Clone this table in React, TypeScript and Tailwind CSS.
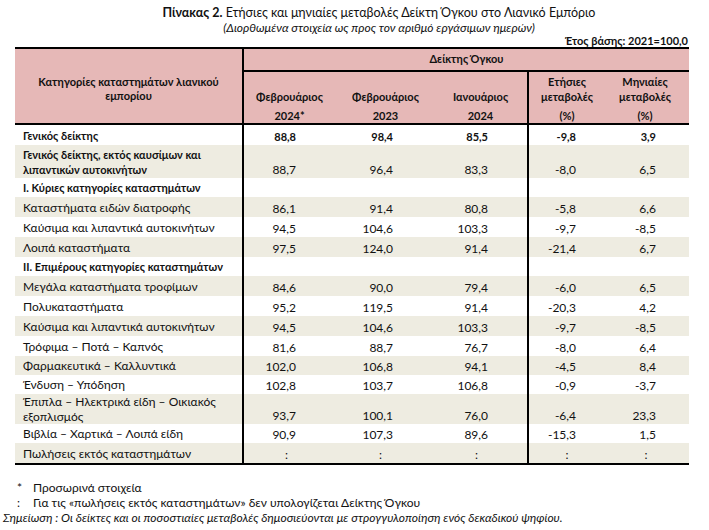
import React from "react";

type Row = {
  label: string[];
  bold?: boolean;
  boldValues?: boolean;
  h: string;
  v?: string[];
  colon?: boolean;
};

const rows: Row[] = [
  { label: ["Γενικός δείκτης"], bold: true, boldValues: true, h: "h-[20px]", v: ["88,8", "98,4", "85,5", "-9,8", "3,9"] },
  { label: ["Γενικός δείκτης, εκτός καυσίμων και", "λιπαντικών αυτοκινήτων"], bold: true, h: "h-[33px]", v: ["88,7", "96,4", "83,3", "-8,0", "6,5"] },
  { label: ["I. Κύριες κατηγορίες καταστημάτων"], bold: true, h: "h-[19px]" },
  { label: ["Καταστήματα ειδών διατροφής"], h: "h-[20px]", v: ["86,1", "91,4", "80,8", "-5,8", "6,6"] },
  { label: ["Καύσιμα και λιπαντικά αυτοκινήτων"], h: "h-[20px]", v: ["94,5", "104,6", "103,3", "-9,7", "-8,5"] },
  { label: ["Λοιπά καταστήματα"], h: "h-[20px]", v: ["97,5", "124,0", "91,4", "-21,4", "6,7"] },
  { label: ["II. Επιμέρους κατηγορίες καταστημάτων"], bold: true, h: "h-[19px]" },
  { label: ["Μεγάλα καταστήματα τροφίμων"], h: "h-[20px]", v: ["84,6", "90,0", "79,4", "-6,0", "6,5"] },
  { label: ["Πολυκαταστήματα"], h: "h-[20px]", v: ["95,2", "119,5", "91,4", "-20,3", "4,2"] },
  { label: ["Καύσιμα και λιπαντικά αυτοκινήτων"], h: "h-[20px]", v: ["94,5", "104,6", "103,3", "-9,7", "-8,5"] },
  { label: ["Τρόφιμα – Ποτά – Καπνός"], h: "h-[20px]", v: ["81,6", "88,7", "76,7", "-8,0", "6,4"] },
  { label: ["Φαρμακευτικά – Καλλυντικά"], h: "h-[19px]", v: ["102,0", "106,8", "94,1", "-4,5", "8,4"] },
  { label: ["Ένδυση – Υπόδηση"], h: "h-[19px]", v: ["102,8", "103,7", "106,8", "-0,9", "-3,7"] },
  { label: ["Έπιπλα – Ηλεκτρικά είδη – Οικιακός", "εξοπλισμός"], h: "h-[30px]", v: ["93,7", "100,1", "76,0", "-6,4", "23,3"] },
  { label: ["Βιβλία – Χαρτικά – Λοιπά είδη"], h: "h-[19px]", v: ["90,9", "107,3", "89,6", "-15,3", "1,5"] },
  { label: ["Πωλήσεις εκτός καταστημάτων"], h: "h-[20px]", v: [":", ":", ":", ":", ":"], colon: true },
];

const colCls = [
  "w-[91px] pr-[39px]",
  "w-[101px] pr-[43px]",
  "w-[93px] pr-[39px] border-r-2 border-black",
  "w-[76px] pr-[29px]",
  "w-[84px] pr-[33px]",
];
const colonCls = [
  "w-[91px] pr-[6px]",
  "w-[101px] pr-[10px]",
  "w-[93px] pr-[10px] border-r-2 border-black",
  "w-[76px]",
  "w-[84px] pr-[2px]",
];

function HeaderCol({ className, top, bottom }: { className: string; top: string[]; bottom: string }) {
  return (
    <div className={"flex flex-col " + className}>
      <div className="h-[32px] flex flex-col justify-end items-center leading-[15px]">
        {top.map((t) => (
          <span key={t}>{t}</span>
        ))}
      </div>
      <div className="h-[19px] flex items-end justify-center leading-[14px]">{bottom}</div>
    </div>
  );
}

export default function App() {
  return (
    <div
      className="w-[709px] h-[530px] bg-white text-[#111] relative overflow-hidden"
      style={{ fontFamily: "Lato, 'Noto Sans', sans-serif" }}
    >
      <div className="pl-[49px] pt-[5px] text-center">
        <p className="text-[12.5px] leading-[16px]">
          <span className="font-bold">Πίνακας 2.</span> Ετήσιες και μηνιαίες μεταβολές Δείκτη Όγκου στο Λιανικό Εμπόριο
        </p>
        <p className="text-[12px] leading-[14px] italic">(Διορθωμένα στοιχεία ως προς τον αριθμό εργάσιμων ημερών)</p>
      </div>
      <p className="text-right pr-[21px] font-bold text-[11px] leading-[12px]">Έτος βάσης: 2021=100,0</p>

      <div className="ml-[15px] w-[674px] border-t-2 border-b-2 border-black text-[12px]">
        {/* header */}
        <div className="flex h-[76px] bg-[#e6b8b7] border-b-2 border-black font-bold text-[11px]">
          <div className="w-[229px] border-r-2 border-black flex items-center justify-center text-center leading-[14px] pt-[5px]">
            <div>
              Κατηγορίες καταστημάτων λιανικού
              <br />
              εμπορίου
            </div>
          </div>
          <div className="flex-1 flex flex-col">
            <div className="h-[23px] border-b-2 border-black flex items-center justify-center">Δείκτης Όγκου</div>
            <div className="flex-1 flex">
              <HeaderCol className="w-[91px]" top={["Φεβρουάριος"]} bottom="2024*" />
              <HeaderCol className="w-[101px]" top={["Φεβρουάριος"]} bottom="2023" />
              <HeaderCol className="w-[93px] border-r-2 border-black pr-[2px]" top={["Ιανουάριος"]} bottom="2024" />
              <HeaderCol className="w-[76px]" top={["Ετήσιες", "μεταβολές"]} bottom="(%)" />
              <HeaderCol className="w-[84px] pr-[4px]" top={["Μηνιαίες", "μεταβολές"]} bottom="(%)" />
            </div>
          </div>
        </div>

        {/* body */}
        {rows.map((r, i) => (
          <div key={i} className={"flex " + r.h + (i % 2 === 1 ? " bg-[#eeece1]" : "")}>
            <div
              className={
                "w-[229px] border-r-2 border-black pl-[8px] flex flex-col justify-center leading-[15px]" +
                (r.bold ? " font-bold text-[11px]" : "")
              }
            >
              {r.label.map((l) => (
                <span key={l}>{l}</span>
              ))}
            </div>
            {(r.v ?? ["", "", "", "", ""]).map((val, j) => (
              <div
                key={j}
                className={
                  "flex items-end leading-[14px] pb-[1px] " +
                  (r.colon ? "justify-center " + colonCls[j] : "justify-end " + colCls[j]) +
                  (r.boldValues ? " font-bold text-[11px]" : "")
                }
              >
                {val}
              </div>
            ))}
          </div>
        ))}
      </div>

      <div className="mt-[15px] text-[12px] leading-[15px]">
        <div className="flex pl-[17px]">
          <span className="w-[16px]">*</span>
          <span>Προσωρινά στοιχεία</span>
        </div>
        <div className="flex pl-[17px]">
          <span className="w-[16px]">:</span>
          <span>Για τις «πωλήσεις εκτός καταστημάτων» δεν υπολογίζεται Δείκτης Όγκου</span>
        </div>
        <div className="pl-[3px] italic">
          Σημείωση : Οι δείκτες και οι ποσοστιαίες μεταβολές δημοσιεύονται με στρογγυλοποίηση ενός δεκαδικού ψηφίου.
        </div>
      </div>
    </div>
  );
}
